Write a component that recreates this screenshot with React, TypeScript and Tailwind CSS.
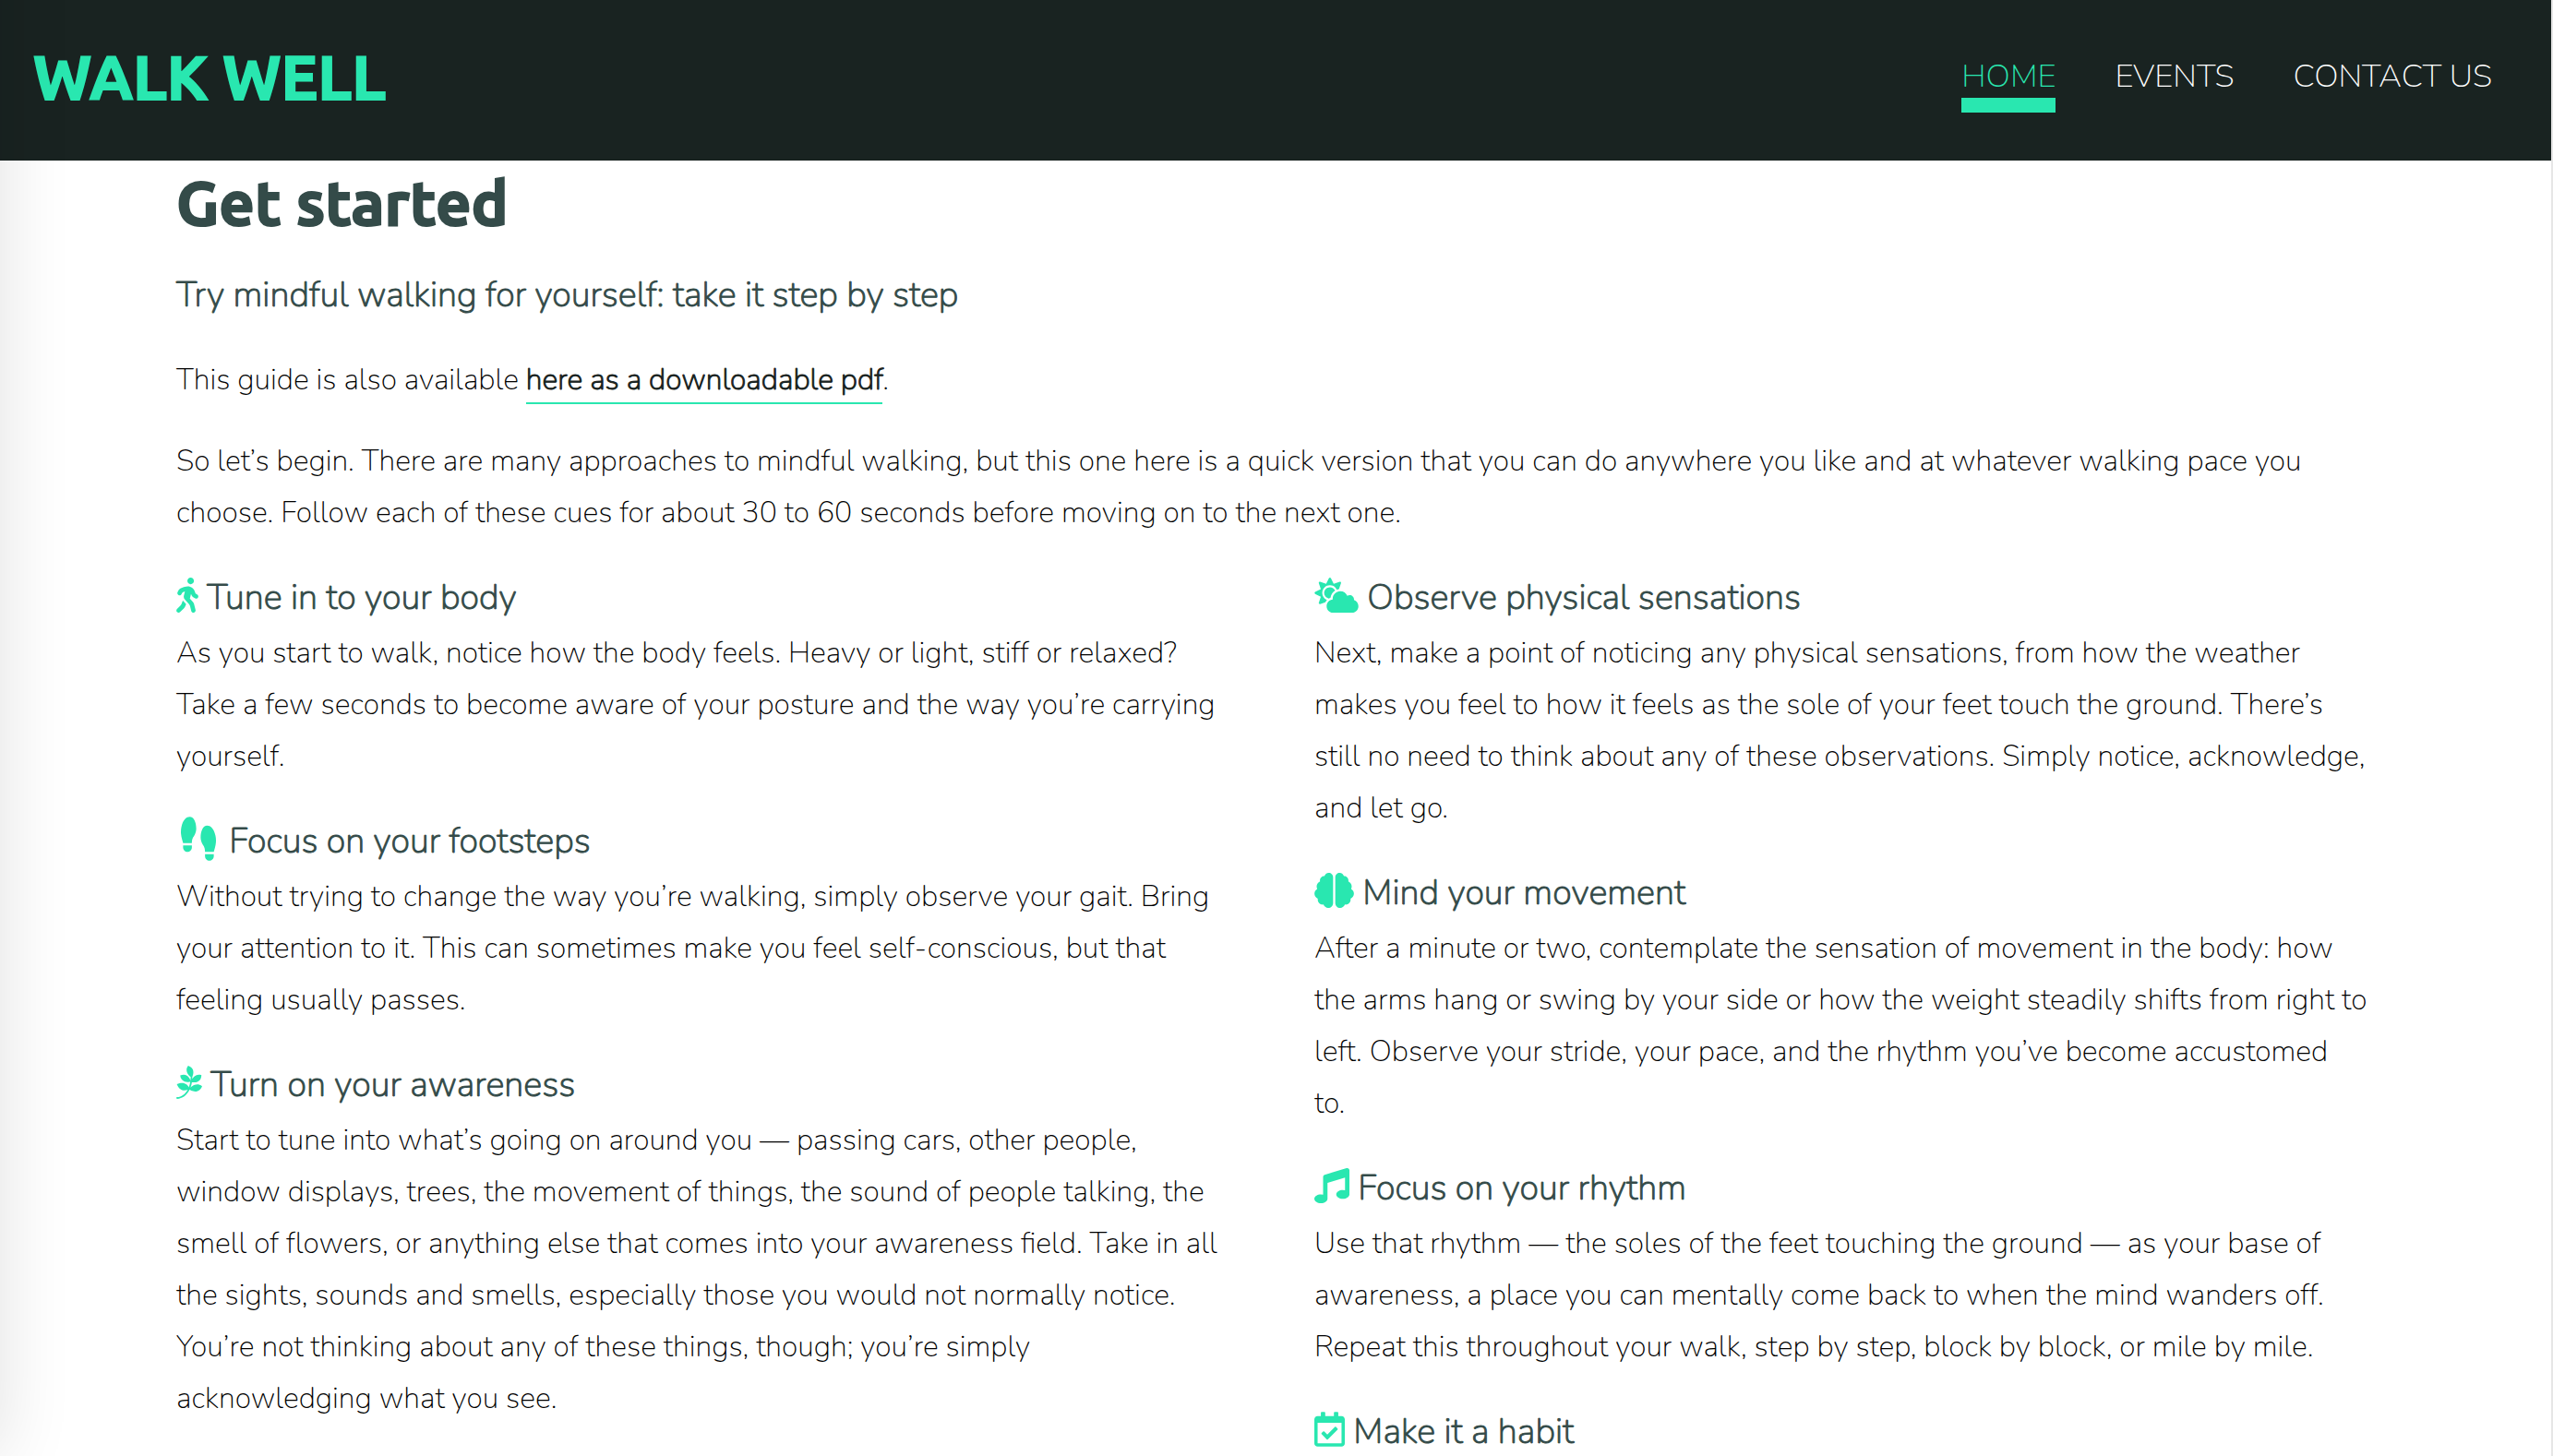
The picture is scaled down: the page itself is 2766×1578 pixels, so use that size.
import type { ReactNode } from "react";
import type { IconType } from "react-icons";
import {
  FaBrain,
  FaCloudSun,
  FaMusic,
  FaPagelines,
  FaRegCalendarCheck,
  FaShoePrints,
  FaWalking,
} from "react-icons/fa";

type StepProps = { icon: IconType; iconClass: string; title: string; children?: ReactNode };

function Step({ icon: Icon, iconClass, title, children }: StepProps) {
  return (
    <section>
      <h3 className="mb-0.5 text-[38px] leading-[60px] text-[#344b49] [-webkit-text-stroke:1px]">
        <Icon
          aria-hidden="true"
          className={`inline-block h-[38px] align-[-4px] text-[#29e7b0] ${iconClass}`}
        />{" "}
        {title}
      </h3>
      {children && <p>{children}</p>}
    </section>
  );
}

const links = [
  { label: "HOME", href: "#home", active: true },
  { label: "EVENTS", href: "#events", active: false },
  { label: "CONTACT US", href: "#contact", active: false },
];

export default function App() {
  return (
    <div className="relative h-screen overflow-hidden border-r-2 border-[#e6e6e6] bg-white font-['Nunito','Open_Sans',sans-serif] text-[32px] leading-[56px] font-extralight text-black">
      <header className="flex h-[174px] items-start justify-between bg-[#192321] pr-16 pl-9">
        <a
          href="#home"
          className="pt-11 font-['Ubuntu','Noto_Sans',sans-serif] text-[67px] leading-[80px] font-bold text-[#29e7b0] [-webkit-text-stroke:2px]"
        >
          WALK WELL
        </a>
        <nav className="flex gap-16 pt-[60px] text-[35px] leading-[46px]">
          {links.map((l) => (
            <a
              key={l.label}
              href={l.href}
              className={
                l.active
                  ? "border-b-16 border-[#29e7b0] text-[#29e7b0]"
                  : "border-b-16 border-transparent text-white"
              }
            >
              {l.label}
            </a>
          ))}
        </nav>
      </header>

      <main className="px-[191px] pt-[6px]">
        <h1 className="font-['Ubuntu','Noto_Sans',sans-serif] text-[67px] leading-[80px] font-bold text-[#344b49] [-webkit-text-stroke:2px]">
          Get started
        </h1>
        <h2 className="mt-[30px] text-[38px] leading-[60px] text-[#344b49] [-webkit-text-stroke:1px]">
          Try mindful walking for yourself: take it step by step
        </h2>
        <p className="mt-[34px]">
          This guide is also available{" "}
          <a
            href="#guide-pdf"
            className="border-b-2 border-[#29e7b0] pb-[3px] text-[#192321] [-webkit-text-stroke:1px]"
          >
            here as a downloadable pdf
          </a>
          .
        </p>
        <p className="mt-8">
          So let’s begin. There are many approaches to mindful walking, but this one here is a quick
          version that you can do anywhere you like and at whatever walking pace you choose. Follow
          each of these cues for about 30 to 60 seconds before moving on to the next one.
        </p>

        <div className="mt-[34px] grid grid-cols-2 gap-[84px]">
          <div className="flex flex-col gap-[34px]">
            <Step icon={FaWalking} iconClass="w-6" title="Tune in to your body">
              As you start to walk, notice how the body feels. Heavy or light, stiff or relaxed? Take
              a few seconds to become aware of your posture and the way you’re carrying yourself.
            </Step>
            <Step icon={FaShoePrints} iconClass="w-12 -rotate-90" title="Focus on your footsteps">
              Without trying to change the way you’re walking, simply observe your gait. Bring your
              attention to it. This can sometimes make you feel self-conscious, but that feeling
              usually passes.
            </Step>
            <Step icon={FaPagelines} iconClass="w-7" title="Turn on your awareness">
              Start to tune into what’s going on around you — passing cars, other people, window
              displays, trees, the movement of things, the sound of people talking, the smell of
              flowers, or anything else that comes into your awareness field. Take in all the sights,
              sounds and smells, especially those you would not normally notice. You’re not thinking
              about any of these things, though; you’re simply
              <br />
              acknowledging what you see.
            </Step>
          </div>
          <div className="flex flex-col gap-[34px]">
            <Step icon={FaCloudSun} iconClass="w-12" title="Observe physical sensations">
              Next, make a point of noticing any physical sensations, from how the weather makes you
              feel to how it feels as the sole of your feet touch the ground. There’s still no need
              to think about any of these observations. Simply notice, acknowledge, and let go.
            </Step>
            <Step icon={FaBrain} iconClass="w-[43px]" title="Mind your movement">
              After a minute or two, contemplate the sensation of movement in the body: how the arms
              hang or swing by your side or how the weight steadily shifts from right to left.
              Observe your stride, your pace, and the rhythm you’ve become accustomed
              <br />
              to.
            </Step>
            <Step icon={FaMusic} iconClass="w-[38px]" title="Focus on your rhythm">
              Use that rhythm — the soles of the feet touching the ground — as your base of
              awareness, a place you can mentally come back to when the mind wanders off. Repeat this
              throughout your walk, step by step, block by block, or mile by mile.
            </Step>
            <Step icon={FaRegCalendarCheck} iconClass="w-[33px]" title="Make it a habit" />
          </div>
        </div>
      </main>

      {/* soft shadow cast along the left edge by the closed drawer */}
      <div
        aria-hidden="true"
        className="pointer-events-none absolute -top-24 right-full bottom-0 w-48 shadow-[0_0_80px_rgba(0,0,0,0.12)]"
      />
    </div>
  );
}
